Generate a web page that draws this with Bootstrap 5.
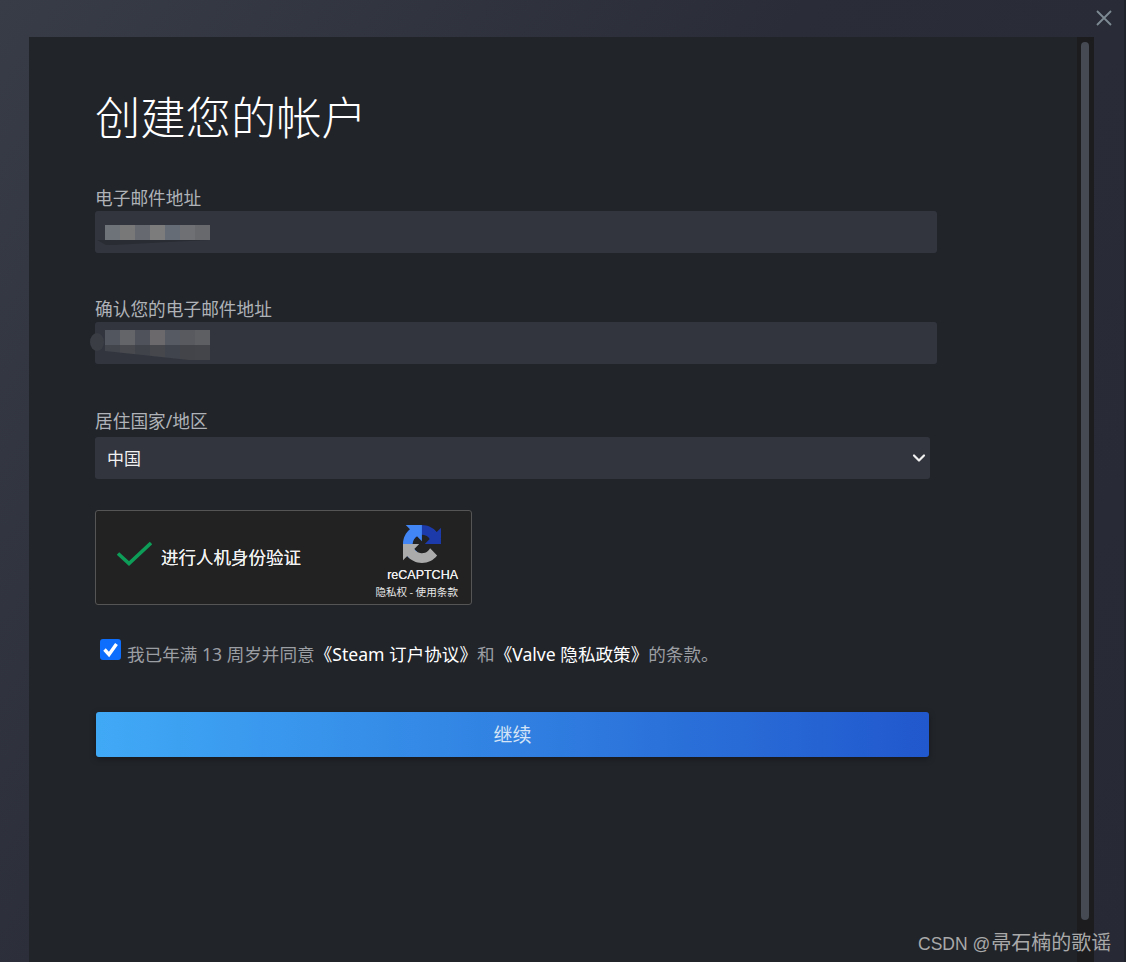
<!DOCTYPE html>
<html lang="zh-CN">
<head>
<meta charset="utf-8">
<title>创建您的帐户</title>
<link href="https://cdn.jsdelivr.net/npm/bootstrap@5.3.0/dist/css/bootstrap.min.css" rel="stylesheet">
<style>
html,body{height:962px;overflow:hidden}
body{background:linear-gradient(125deg,#383c46 0,#2a2d37 45%,#272a34 100%);font-family:"Noto Sans","Noto Sans CJK SC",sans-serif;color:#b0b3b8}
.shell{height:962px;padding:37px 32px 0 29px;position:relative;box-shadow:inset -2px 0 0 #20232b}
.pane{background:#212429}
.pane-body{padding:48px 0 0 66px}
.sb-track{width:17px;background:#1c1c1f;padding:5px 4px 0}
.sb-thumb{width:8px;height:878px;border-radius:4px;background:#454a53}
.close-x{position:absolute;top:10px;right:14px;line-height:0}
.title{font-size:45.3px;font-weight:300;color:#fff;line-height:60px;margin:0 0 41px;font-family:"Noto Sans CJK SC",sans-serif}
.fld-label{display:block;font-size:17.7px;line-height:24px;color:#afb3b8;margin:0 0 1px}
.lbl-far{margin-bottom:4px}
.fld-wrap{position:relative;width:842px}
.fld{display:block;width:842px;height:42px;background:#32353e;border:0;border-radius:3px;box-shadow:none}
.sel{width:835px;height:42px;background-color:#32353e;border:0;border-radius:3px;color:#f0f0f0;font-size:17px;padding:0 30px 0 12px;font-family:"Noto Sans CJK SC",sans-serif;background-image:url("data:image/svg+xml,%3csvg xmlns='http://www.w3.org/2000/svg' viewBox='0 0 16 16'%3e%3cpath fill='none' stroke='%23f2f2f2' stroke-linecap='round' stroke-linejoin='round' stroke-width='2.2' d='m3 5.5 5 5 5-5'/%3e%3c/svg%3e");background-position:right 3px center;background-size:16px 16px}
.mosaic{position:absolute;left:10px;display:flex;flex-direction:column}
.mos-one{top:14px}
.mos-two{top:8px}
.mos-row{display:flex;height:15px}
.mos-row span{width:15px}
.mos-tail{width:113px;height:5px;margin-left:-8px;background:#2a2c33;clip-path:polygon(0 0,100% 0,55% 50%,15% 100%,8% 100%)}
.mos-lower{height:15px;clip-path:polygon(0 0,100% 0,100% 100%,80% 100%,0 40%)}
.mos-dot{position:absolute;left:-5px;top:11px;width:14px;height:18px;border-radius:50%;background:#3a3d44}
.c1{background:#6e7279}.c2{background:#787878}.c3{background:#666a70}.c4{background:#7c7c7c}.c5{background:#666c75}.c6{background:#6f7074}.c7{background:#68696c}
.d1{background:#52565f}.d2{background:#646568}.d3{background:#4f525a}.d4{background:#6b696c}.d5{background:#565a63}.d6{background:#585a60}.d7{background:#5e5f63}
.e1{background:#42454c}.e2{background:#47494e}.e3{background:#40434a}.e4{background:#45474d}.e5{background:#40444c}.e6{background:#424449}.e7{background:#44454a}
.gap-a{margin-bottom:44px}
.gap-b{margin-bottom:45px}
.rc-box{width:377px;height:95px;background:#222;border:1px solid #555;border-radius:3px;margin-top:31px;padding:0 13px 0 20px;color:#eee;font-family:"Liberation Sans","Noto Sans CJK SC",sans-serif}
.rc-mark{margin-bottom:7px}
.rc-label{font-size:17.5px;color:#f0f0f0;margin-left:9px;white-space:nowrap;font-family:"Noto Sans CJK SC",sans-serif;text-shadow:0 0 .6px #f0f0f0}
.rc-side{padding-top:14px;align-self:flex-start}
.rc-ico{margin-right:17px}
.rc-brand{font-size:12.5px;line-height:14px;color:#eee;margin-top:5px;text-shadow:0 0 .4px #eee}
.rc-links{font-size:10.6px;line-height:12px;color:#e8e8e8;margin-top:4px;white-space:nowrap;font-family:"Noto Sans CJK SC",sans-serif}
.agree{margin:34px 0 0 5px;font-size:17.6px;line-height:30px;color:#9b9ea3;white-space:nowrap}
.agree .form-check-input{width:21px;height:21px;margin:0 6px 0 0;border:0;border-radius:3px;background-color:#0d6efd;flex:none;background-size:21px 21px;background-image:url("data:image/svg+xml,%3csvg xmlns='http://www.w3.org/2000/svg' viewBox='0 0 21 21'%3e%3cpath fill='none' stroke='%23fff' stroke-width='3.4' d='m4.500 10.500 4.500 5 7.500-10.500'/%3e%3c/svg%3e")}
.agree a{color:#fff;text-decoration:none}
.go-btn{display:block;width:833px;height:45px;margin:43px 0 0 1px;border:0;border-radius:3px;background:linear-gradient(90deg,#40a9f6 0,#2158cd 100%);color:#d5e4f6;font-size:19px;box-shadow:0 2px 6px rgba(0,0,0,.35);font-family:"Noto Sans CJK SC",sans-serif}
.wm{position:absolute;left:918px;top:929px;font-size:20px;line-height:28px;color:#a9a9a9;font-family:"Liberation Sans","Noto Sans CJK SC",sans-serif;white-space:nowrap}
.wm-latin{font-size:17.5px;margin-right:1px}
</style>
</head>
<body>
<div class="shell d-flex">
  <div class="pane flex-grow-1 d-flex justify-content-between">
    <form class="pane-body">
      <h1 class="title">创建您的帐户</h1>
      <div class="gap-a">
        <label class="fld-label">电子邮件地址</label>
        <div class="fld-wrap">
          <input class="form-control fld" type="text" aria-label="电子邮件地址">
          <div class="mosaic mos-one">
            <div class="mos-row"><span class="c1"></span><span class="c2"></span><span class="c3"></span><span class="c4"></span><span class="c5"></span><span class="c6"></span><span class="c7"></span></div>
            <div class="mos-tail"></div>
          </div>
        </div>
      </div>
      <div class="gap-b">
        <label class="fld-label">确认您的电子邮件地址</label>
        <div class="fld-wrap">
          <input class="form-control fld" type="text" aria-label="确认您的电子邮件地址">
          <div class="mos-dot"></div>
          <div class="mosaic mos-two">
            <div class="mos-row"><span class="d1"></span><span class="d2"></span><span class="d3"></span><span class="d4"></span><span class="d5"></span><span class="d6"></span><span class="d7"></span></div>
            <div class="mos-row mos-lower"><span class="e1"></span><span class="e2"></span><span class="e3"></span><span class="e4"></span><span class="e5"></span><span class="e6"></span><span class="e7"></span></div>
          </div>
        </div>
      </div>
      <label class="fld-label lbl-far">居住国家/地区</label>
      <select class="form-select sel" aria-label="居住国家/地区"><option>中国</option></select>
      <div class="rc-box d-flex align-items-center justify-content-between">
        <div class="d-flex align-items-center">
          <svg class="rc-mark" width="36" height="28" viewBox="0 0 36 28"><path d="M2 13.500 L13 23.500 L35 3" fill="none" stroke="#0e9d58" stroke-width="3.6"/></svg>
          <span class="rc-label">进行人机身份验证</span>
        </div>
        <div class="rc-side d-flex flex-column align-items-end">
          <svg width="38" height="38" viewBox="0 0 64 64" class="rc-ico">
            <path d="M64 31.955l-.033-1.37V4.687l-7.16 7.16C50.948 4.674 42.033.093 32.05.093c-10.4 0-19.622 4.96-25.458 12.64l11.736 11.86a15.55 15.55 0 0 1 4.754-5.334c2.05-1.6 4.952-2.906 8.968-2.906.485 0 .86.057 1.135.163 4.976.393 9.288 3.14 11.828 7.124l-8.307 8.307 26.3.004" fill="#1c3aa9"/>
            <path d="M31.862 0l-1.37.033H4.594l7.16 7.16C4.58 13.052 0 21.967 0 31.95c0 10.4 4.96 19.622 12.64 25.458l11.86-11.736a15.55 15.55 0 0 1-5.334-4.754c-1.6-2.05-2.906-4.952-2.906-8.968 0-.485.057-.86.163-1.135.393-4.976 3.14-9.288 7.124-11.828l8.307 8.307L31.862 0" fill="#4285f4"/>
            <path d="M.002 31.953l.033 1.37v25.898l7.16-7.16C13.054 59.234 21.97 63.815 31.95 63.815c10.4 0 19.622-4.96 25.458-12.64L45.672 39.314a15.55 15.55 0 0 1-4.754 5.334c-2.05 1.6-4.952 2.906-8.968 2.906-.485 0-.86-.057-1.135-.163-4.976-.393-9.288-3.14-11.828-7.124l8.307-8.307-26.3-.004" fill="#ababab"/>
          </svg>
          <div class="rc-brand">reCAPTCHA</div>
          <div class="rc-links">隐私权 - 使用条款</div>
        </div>
      </div>
      <div class="agree d-flex align-items-start">
        <input class="form-check-input" type="checkbox" checked aria-label="同意条款">
        <span>我已年满 13 周岁并同意<a href="#">《Steam 订户协议》</a>和<a href="#">《Valve 隐私政策》</a>的条款。</span>
      </div>
      <button class="btn go-btn" type="button">继续</button>
    </form>
    <div class="sb-track"><div class="sb-thumb"></div></div>
  </div>
  <div class="close-x"><svg width="16" height="16" viewBox="0 0 16 16"><path d="M1 1 L15 15 M15 1 L1 15" stroke="#7d8a93" stroke-width="1.800" fill="none"/></svg></div>
  <div class="wm"><span class="wm-latin">CSDN @</span>帚石楠的歌谣</div>
</div>
<script src="https://cdn.jsdelivr.net/npm/bootstrap@5.3.0/dist/js/bootstrap.bundle.min.js"></script>
</body>
</html>
